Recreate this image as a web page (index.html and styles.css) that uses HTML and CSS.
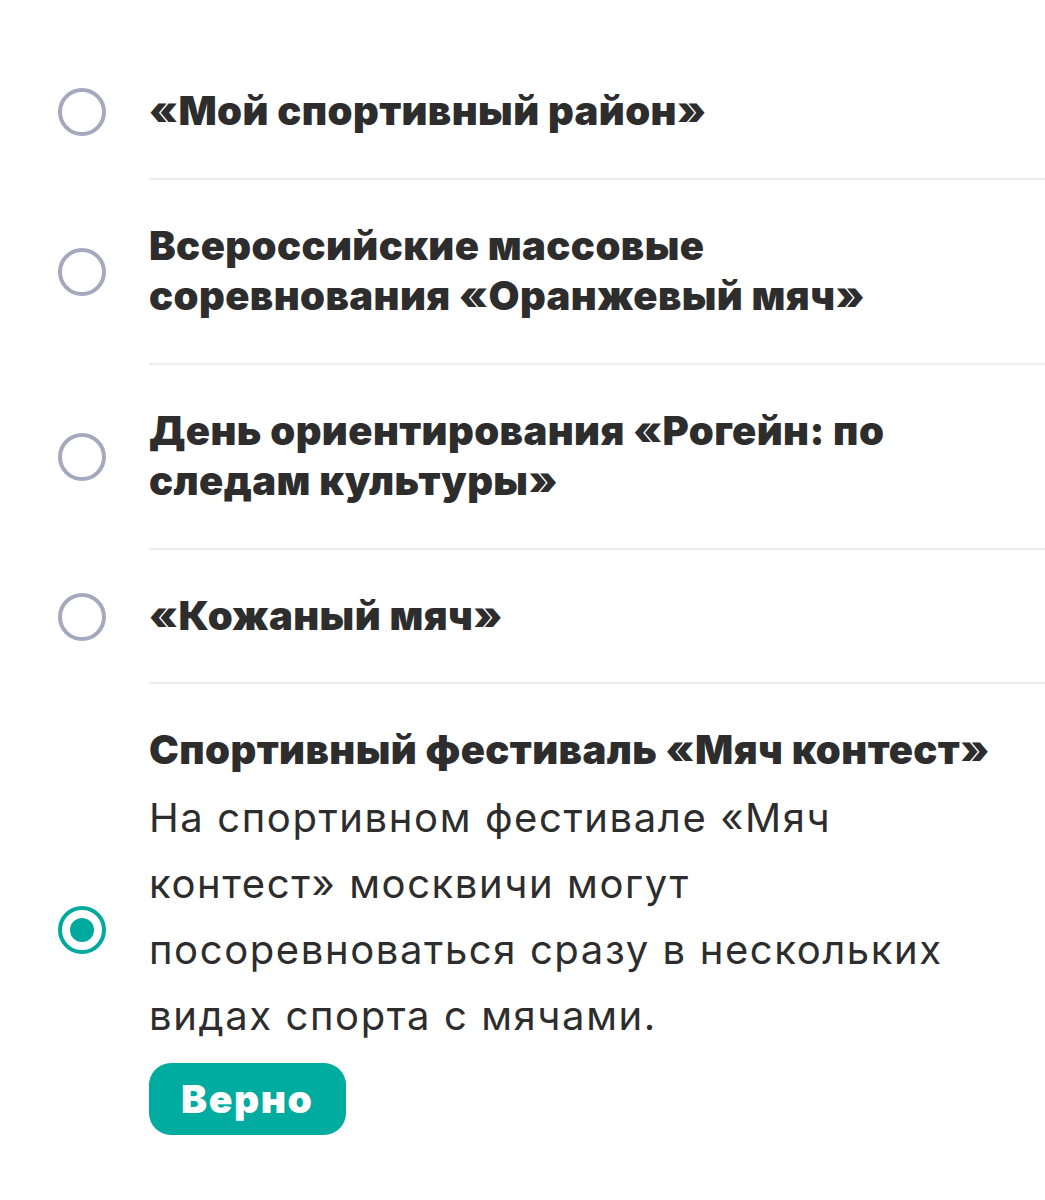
FILE: index.html
```html
<!DOCTYPE html>
<html lang="ru">
<head>
<meta charset="utf-8">
<link rel="stylesheet" href="styles.css">
</head>
<body>
<div class="list">
  <div class="item">
    <span class="radio"></span>
    <div class="body"><div class="title">«Мой спортивный район»</div></div>
  </div>
  <div class="item">
    <span class="radio"></span>
    <div class="body"><div class="title">Всероссийские массовые<br>соревнования «Оранжевый мяч»</div></div>
  </div>
  <div class="item">
    <span class="radio"></span>
    <div class="body"><div class="title">День ориентирования «Рогейн: по<br>следам культуры»</div></div>
  </div>
  <div class="item">
    <span class="radio"></span>
    <div class="body"><div class="title">«Кожаный мяч»</div></div>
  </div>
  <div class="item last">
    <span class="radio checked"></span>
    <div class="body">
      <div class="title">Спортивный фестиваль «Мяч контест»</div>
      <div class="desc">На спортивном фестивале «Мяч<br>контест» москвичи могут<br>посоревноваться сразу в нескольких<br>видах спорта с мячами.</div>
      <span class="badge">Верно</span>
    </div>
  </div>
</div>
</body>
</html>
```
FILE: styles.css
```css
html, body { margin: 0; padding: 0; background: #fff; }
body { font-family: Inter, "Noto Sans", sans-serif; color: #2d2d2d; }
.list { padding-top: 45px; }
.item { display: flex; align-items: center; }
.radio { flex: none; width: 40px; height: 40px; border: 4px solid #a4a9bd; border-radius: 50%; margin-left: 58px; margin-right: 43px; position: relative; }
.radio.checked { border-color: #00a99d; }
.radio.checked::before { content: ""; position: absolute; left: 8px; top: 8px; width: 24px; height: 24px; border-radius: 50%; background: #00a99d; }
.body { flex: 1; padding: 41px 0; border-bottom: 2px solid #ececf1; }
.item.last .body { border-bottom: none; padding-bottom: 42px; }
.title { font-size: 40px; line-height: 50.5px; font-weight: 900; letter-spacing: 0.4px; }
.desc { margin-top: 9px; font-size: 40px; line-height: 66px; font-weight: 400; letter-spacing: 1.6px; }
.badge { display: inline-block; margin-top: 14px; background: #00ab9f; color: #fff; font-size: 39px; font-weight: 900; line-height: 72px; height: 72px; padding: 0 32px; border-radius: 22px; letter-spacing: 1.6px; }
```
